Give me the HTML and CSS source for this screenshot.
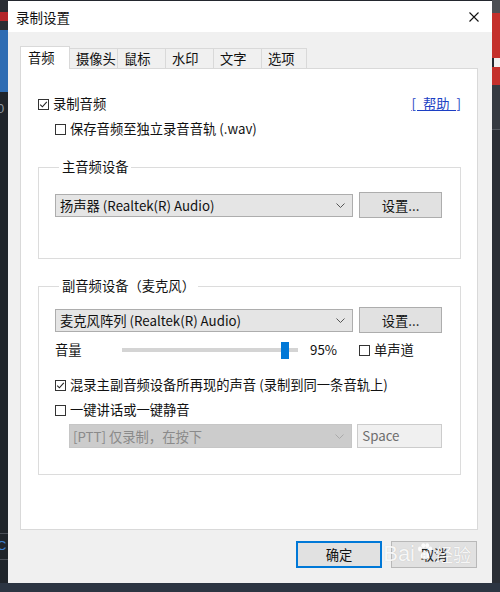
FILE: index.html
```html
<!DOCTYPE html>
<html lang="zh-CN">
<head>
<meta charset="utf-8">
<title>录制设置</title>
<link rel="stylesheet" href="styles.css">
</head>
<body>
<div class="screen">
  <div class="strip strip-left">
    <div class="s-dark h12"></div>
    <div class="s-red h9"></div>
    <div class="s-dark h9"></div>
    <div class="s-blue h62"></div>
    <div class="s-deep h441"><span class="strip-text">0</span></div>
    <div class="s-line"></div>
    <div class="s-deep h25"><span class="strip-text blue">C</span></div>
    <div class="s-line"></div>
    <div class="s-deep grow"></div>
  </div>

  <div class="dialog">
    <div class="titlebar">
      <span class="title">录制设置</span>
      <svg class="close" width="10" height="10" viewBox="0 0 10 10"><path d="M0.5 0.5 L9.5 9.5 M9.5 0.5 L0.5 9.5" stroke="#111" stroke-width="1.1" fill="none"/></svg>
    </div>
    <div class="body">
      <div class="tabs">
        <div class="tab active">音频</div>
        <div class="tab">摄像头</div>
        <div class="tab">鼠标</div>
        <div class="tab">水印</div>
        <div class="tab">文字</div>
        <div class="tab last">选项</div>
      </div>
      <div class="panel">
        <div class="row row-top">
          <div class="check-item"><span class="cb"><svg width="9" height="9" viewBox="0 0 9 9"><path d="M1.2 4.6 L3.4 6.8 L7.8 1.8" stroke="#222" stroke-width="1.1" fill="none"/></svg></span><span>录制音频</span></div>
          <span class="help">[ 帮助 ]</span>
        </div>
        <div class="row row-sub">
          <div class="check-item"><span class="cb"></span><span>保存音频至独立录音音轨 (.wav)</span></div>
        </div>

        <div class="group g1">
          <div class="legend">主音频设备</div>
          <div class="devrow">
            <div class="select"><span>扬声器 (Realtek(R) Audio)</span><svg width="9" height="5" viewBox="0 0 9 5"><path d="M0.5 0.5 L4.5 4.5 L8.5 0.5" stroke="#555" fill="none"/></svg></div>
            <div class="btn">设置...</div>
          </div>
        </div>

        <div class="group g2">
          <div class="legend">副音频设备（麦克风）</div>
          <div class="devrow">
            <div class="select"><span>麦克风阵列 (Realtek(R) Audio)</span><svg width="9" height="5" viewBox="0 0 9 5"><path d="M0.5 0.5 L4.5 4.5 L8.5 0.5" stroke="#555" fill="none"/></svg></div>
            <div class="btn">设置...</div>
          </div>
          <div class="row vol-row">
            <span class="vol-label">音量</span>
            <div class="slider"><div class="thumb"></div></div>
            <span class="pct">95%</span>
            <div class="check-item"><span class="cb"></span><span>单声道</span></div>
          </div>
          <div class="row mix-row">
            <div class="check-item"><span class="cb"><svg width="9" height="9" viewBox="0 0 9 9"><path d="M1.2 4.6 L3.4 6.8 L7.8 1.8" stroke="#222" stroke-width="1.1" fill="none"/></svg></span><span>混录主副音频设备所再现的声音 (录制到同一条音轨上)</span></div>
          </div>
          <div class="row ptt-check">
            <div class="check-item"><span class="cb"></span><span>一键讲话或一键静音</span></div>
          </div>
          <div class="ptt-row">
            <div class="select disabled"><span>[PTT] 仅录制，在按下</span><svg width="9" height="5" viewBox="0 0 9 5"><path d="M0.5 0.5 L4.5 4.5 L8.5 0.5" stroke="#aaa" fill="none"/></svg></div>
            <div class="keybox">Space</div>
          </div>
        </div>
      </div>
      <div class="buttons">
        <div class="btn2 ok">确定</div>
        <div class="btn2 cancel">取消</div>
        <div class="watermark">
          <span class="wm-bai">Bai</span>
          <svg class="paw" width="16" height="17" viewBox="0 0 16 17"><g fill="rgba(255,255,255,0.9)"><ellipse cx="3" cy="6" rx="2" ry="2.4"/><ellipse cx="6.3" cy="2.6" rx="2" ry="2.4"/><ellipse cx="10.2" cy="2.6" rx="2" ry="2.4"/><ellipse cx="13.2" cy="6" rx="2" ry="2.4"/><path d="M8 8 C5 8 3 12 4 14.5 C5 16.5 11 16.5 12 14.5 C13 12 11 8 8 8 Z"/></g></svg>
          <span class="wm-jy">经验</span>
        </div>
      </div>
    </div>
  </div>

  <div class="strip strip-right">
    <div class="r-gray h13"></div>
    <div class="r-red h45"></div>
    <div class="r-white h9"></div>
    <div class="r-red h18"></div>
    <div class="r-dark h44"></div>
    <div class="r-line"></div>
    <div class="r-deep grow"></div>
  </div>
</div>
</body>
</html>
```

FILE: styles.css
```css
* { box-sizing: border-box; }
html, body { margin: 0; padding: 0; }
body {
  width: 500px;
  height: 592px;
  overflow: hidden;
  background: #2c3542;
  font-family: "Noto Sans CJK SC", "Microsoft YaHei", sans-serif;
  font-size: 13.3px;
  color: #111;
}
.screen {
  display: flex;
  height: 583px;
  background: #23272e;
}

/* side strips (background app) */
.strip { width: 8px; display: flex; flex-direction: column; overflow: hidden; }
.h9 { height: 9px; } .h12 { height: 12px; } .h13 { height: 13px; }
.h18 { height: 18px; } .h25 { height: 25px; } .h44 { height: 44px; }
.h45 { height: 45px; } .h62 { height: 62px; } .h441 { height: 441px; }
.grow { flex: 1; }
.s-dark { background: #2a2d33; }
.s-red { background: #b3262a; }
.s-blue { background: #2e6cb3; }
.s-deep { background: #1f242a; }
.s-line { height: 1px; background: #4a4f57; }
.strip-text {
  display: block;
  margin: 10px 0 0 -3px;
  font-family: "Liberation Sans", sans-serif;
  font-size: 13px;
  color: #8d949c;
  line-height: 14px;
}
.strip-text.blue { margin-top: 5px; color: #3d7fd0; }
.r-gray { background: #4d4f54; }
.r-red { background: #c4302b; }
.r-white { background: #f0f0f0; margin-left: 2px; }
.r-dark { background: #353a41; }
.r-line { height: 1px; background: #555a61; }
.r-deep { background: #2a2e35; }

/* dialog */
.dialog {
  width: 484px;
  margin-top: 1px;
  display: flex;
  flex-direction: column;
  background: #f0f0f0;
}
.titlebar {
  height: 31px;
  flex: none;
  background: #fff;
  display: flex;
  align-items: center;
  justify-content: space-between;
  padding: 0 13px 0 8px;
}
.title { font-size: 13.5px; color: #111; }
.body {
  flex: 1;
  padding: 14px 14px 15px 12px;
  display: flex;
  flex-direction: column;
}

/* tabs */
.tabs {
  display: flex;
  align-items: flex-end;
  height: 23px;
  margin-bottom: -1px;
  position: relative;
  z-index: 1;
}
.tab {
  width: 48px;
  height: 20px;
  margin-bottom: 1px;
  background: #f0f0f0;
  border-top: 1px solid #d9d9d9;
  border-right: 1px solid #d9d9d9;
  padding-left: 6px;
  line-height: 19px;
  white-space: nowrap;
}
.tab.last { width: 45px; }
.tab.active {
  width: 50px;
  height: 23px;
  margin-bottom: 0;
  background: #fff;
  border-left: 1px solid #d9d9d9;
  padding-left: 7px;
  line-height: 22px;
}

.panel {
  height: 462px;
  background: #fff;
  border: 1px solid #d9d9d9;
  padding: 25px 16px 0 17px;
}
.row {
  display: flex;
  align-items: center;
  height: 20px;
  line-height: 20px;
  white-space: nowrap;
}
.row-top { justify-content: space-between; }
.row-sub { margin-top: 5px; padding-left: 17px; }
.check-item { display: flex; align-items: center; }
.cb {
  width: 11px;
  height: 11px;
  flex: none;
  border: 1px solid #333;
  background: #fff;
  margin-right: 4px;
  display: flex;
  align-items: center;
  justify-content: center;
}
.help {
  color: #1c3fc4;
  text-decoration: underline;
  white-space: pre;
  word-spacing: 4px;
}

/* group boxes */
.group {
  border: 1px solid #dcdcdc;
  padding: 0 18px 0 16px;
}
.legend {
  width: max-content;
  margin: -10px 0 0 4px;
  padding: 0 3px;
  background: #fff;
  line-height: 18px;
}
.g1 { margin-top: 28px; padding-bottom: 40px; }
.g1 .devrow { margin-top: 16px; }
.g2 { margin-top: 27px; padding-bottom: 26px; }
.g2 .devrow { margin-top: 12px; }

.devrow {
  display: flex;
  align-items: center;
  gap: 6px;
  height: 26px;
}
.select {
  width: 298px;
  height: 23px;
  border: 1px solid #adadad;
  background: #e5e5e5;
  display: flex;
  align-items: center;
  justify-content: space-between;
  padding: 0 7px 0 4px;
  white-space: nowrap;
}
.btn {
  width: 83px;
  height: 26px;
  border: 1px solid #adadad;
  background: #e1e1e1;
  display: flex;
  align-items: center;
  justify-content: center;
}

.vol-row { margin-top: 7px; }
.vol-label { width: 67px; }
.slider {
  width: 176px;
  height: 17px;
  display: flex;
  align-items: center;
  background: linear-gradient(#d4d4d4, #d4d4d4) center / 100% 4px no-repeat;
}
.thumb {
  width: 8px;
  height: 17px;
  margin-left: 159px;
  background: #0078d7;
}
.pct { width: 49px; margin-left: 12px; }
.mix-row { margin-top: 15px; }
.ptt-check { margin-top: 5px; }
.ptt-row {
  display: flex;
  align-items: center;
  gap: 5px;
  margin-top: 4px;
  margin-left: 14px;
  height: 24px;
}
.select.disabled {
  width: 284px;
  height: 24px;
  background: #cccccc;
  border-color: #c6c6c6;
  color: #8a8a8a;
  padding-left: 3px;
}
.keybox {
  width: 85px;
  height: 24px;
  border: 1px solid #cccccc;
  background: #f0f0f0;
  color: #6d6d6d;
  padding-left: 4px;
  line-height: 22px;
}

/* bottom buttons */
.buttons {
  position: relative;
  display: flex;
  justify-content: flex-end;
  gap: 9px;
  margin-top: 11px;
  padding-right: 1px;
}
.btn2 {
  width: 86px;
  height: 27px;
  background: #e1e1e1;
  display: flex;
  align-items: center;
  justify-content: center;
}
.ok { border: 2px solid #0078d7; }
.cancel { border: 1px solid #b8b8b8; color: #222; }
.watermark {
  position: absolute;
  right: 7px;
  top: -2px;
  display: flex;
  align-items: center;
  gap: 2px;
  color: rgba(255, 255, 255, 0.88);
  text-shadow: 0 0 1px rgba(0, 0, 0, 0.18);
  pointer-events: none;
}
.wm-bai {
  font-family: "Liberation Sans", sans-serif;
  font-size: 22px;
  line-height: 30px;
}
.paw { margin-top: -6px; }
.wm-jy { font-size: 18px; line-height: 30px; }
```
